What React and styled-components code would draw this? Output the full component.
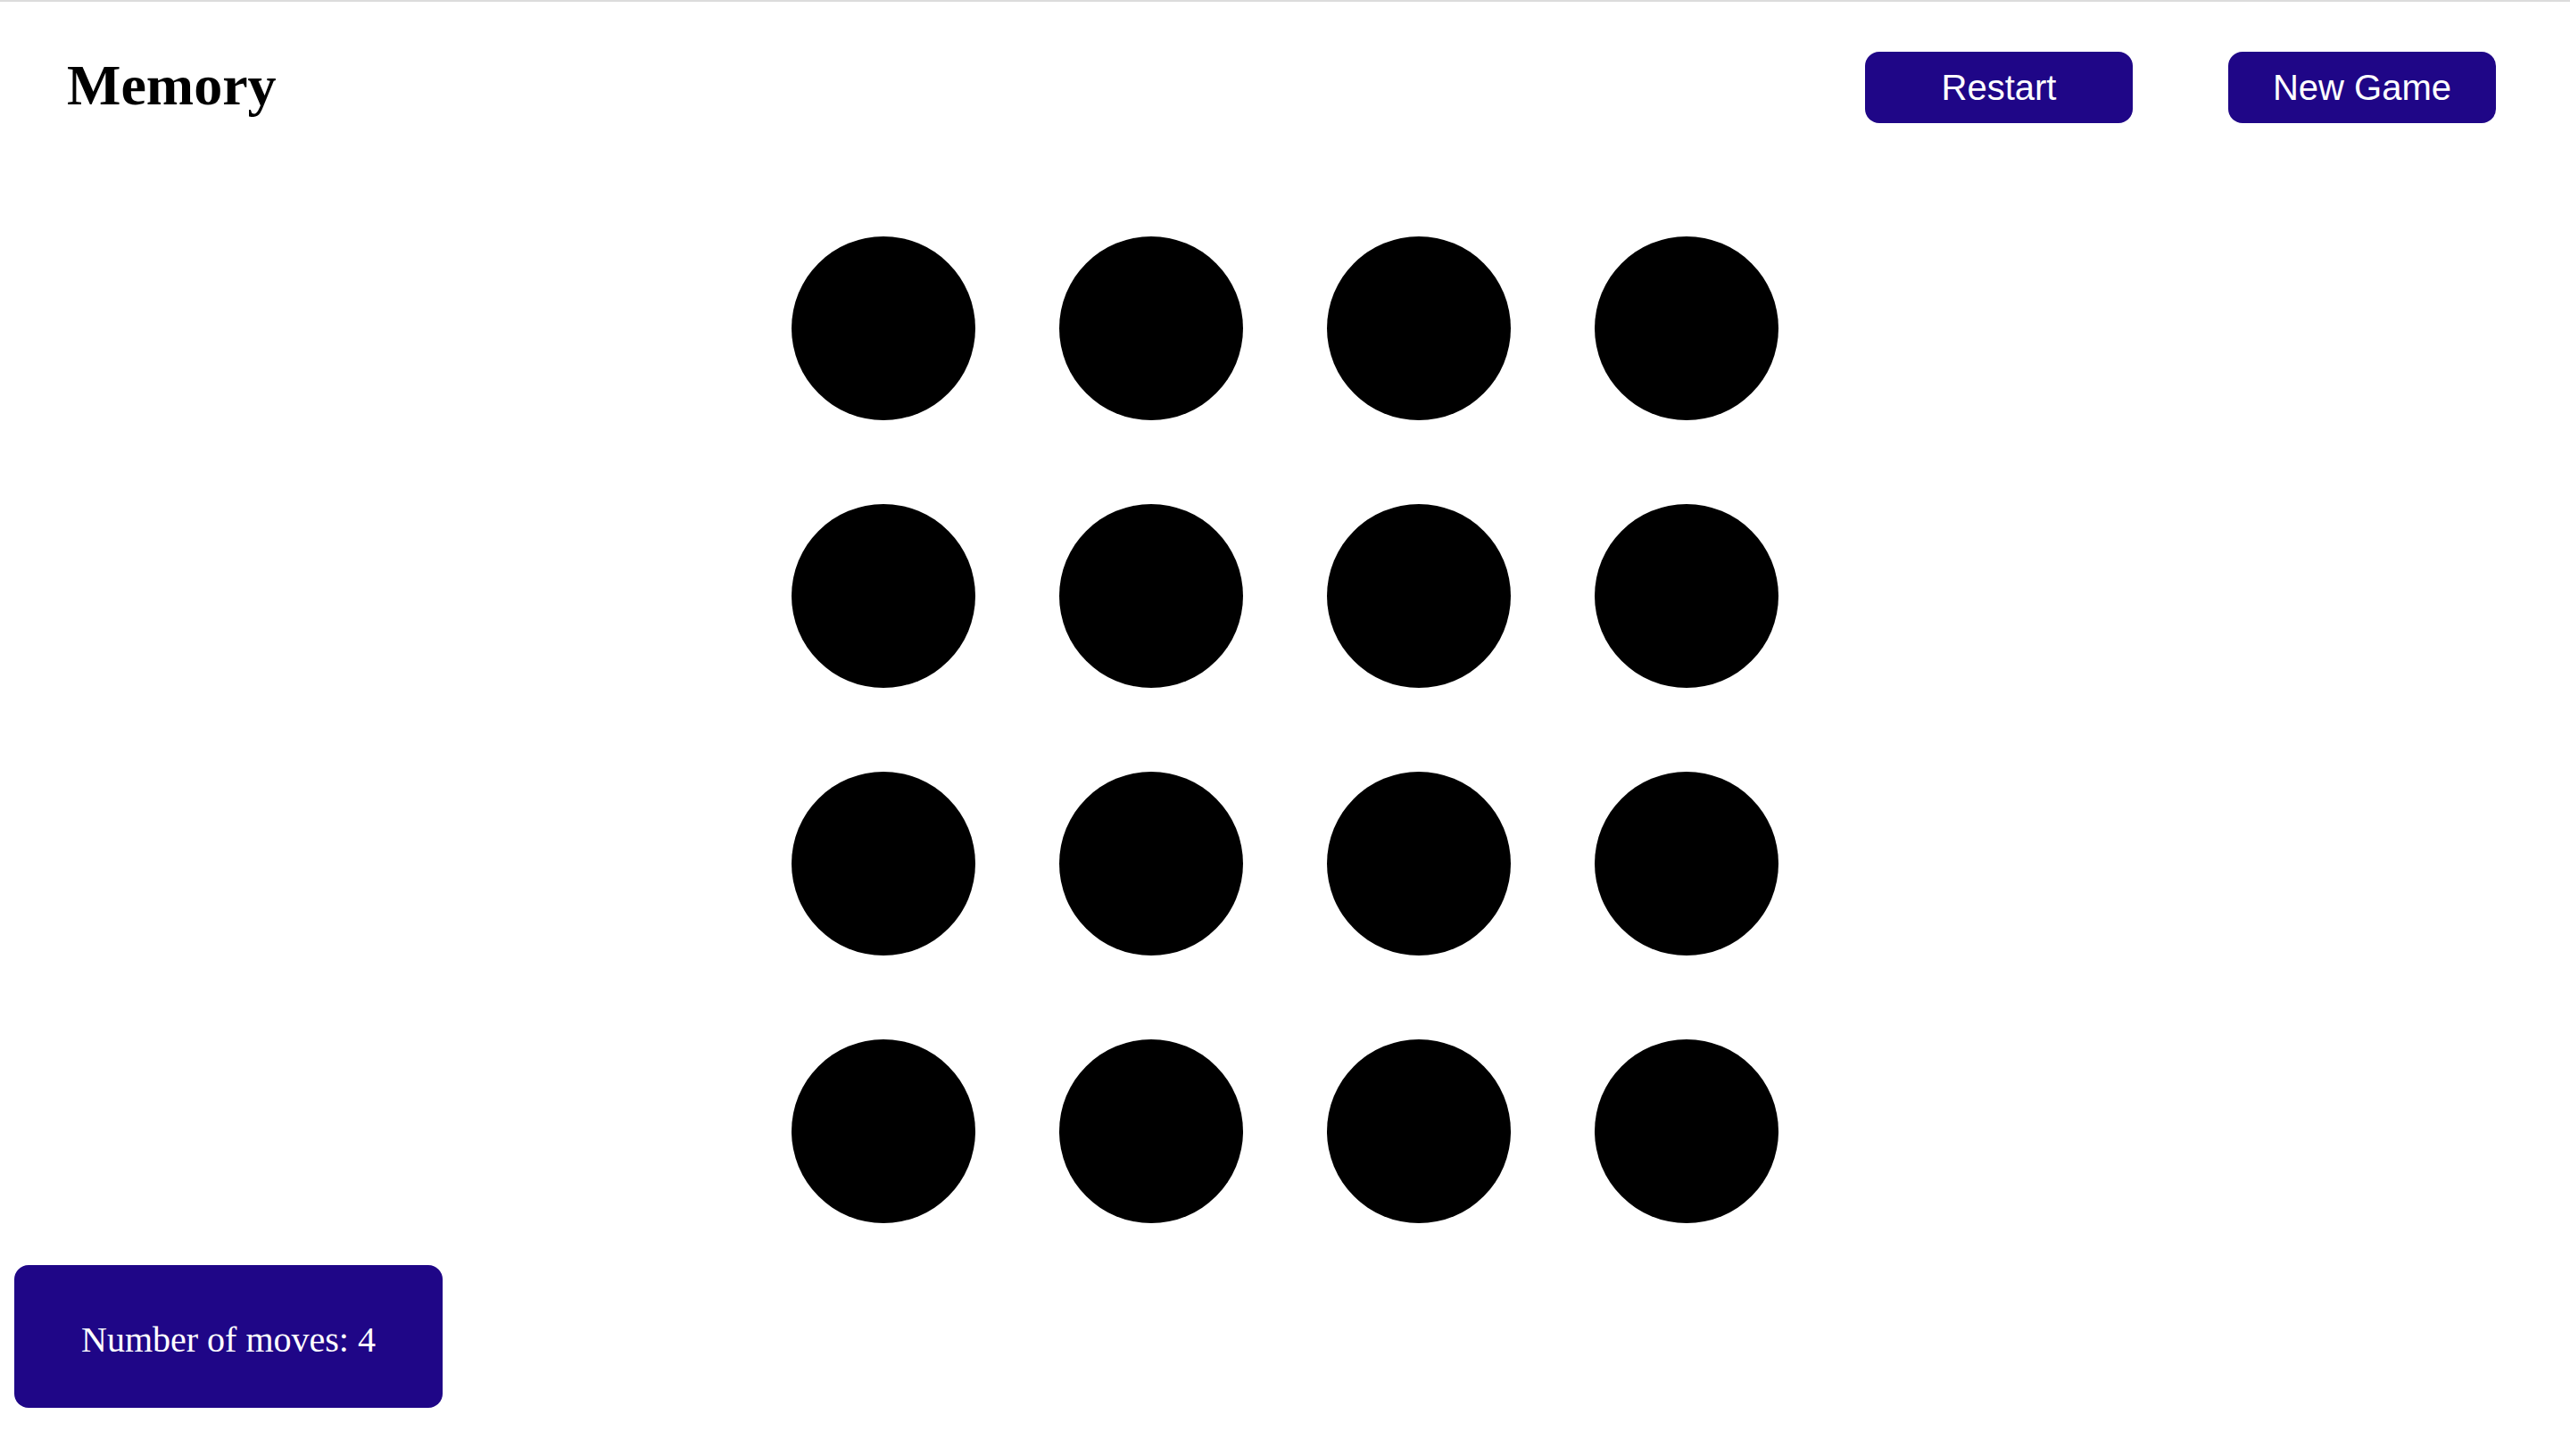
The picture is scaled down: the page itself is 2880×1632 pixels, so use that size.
import React, { useState } from 'react'
import styled, { createGlobalStyle } from 'styled-components'

const colorBoton = 'rgb(31, 6, 135)'

const GlobalStyle = createGlobalStyle`
  html, body {
    margin: 0;
    padding: 0;
    background: #ffffff;
    overflow: hidden;
  }
  body {
    border-top: 2px solid #dcdcdc;
    font-family: "Liberation Serif", "Times New Roman", serif;
  }
`

const Pagina = styled.div`
  display: flex;
  flex-direction: column;
  min-height: 1630px;
`

const Cabecera = styled.header`
  display: flex;
  justify-content: space-between;
  align-items: center;
  padding: 56px 83px 0 75px;
`

const Titulo = styled.h1`
  margin: 0 0 5px 0;
  font-family: "Liberation Serif", "Times New Roman", serif;
  font-size: 64px;
  font-weight: bold;
  color: #000;
`

const Acciones = styled.div`
  display: flex;
  gap: 107px;
`

const Boton = styled.button`
  width: 300px;
  height: 80px;
  border: none;
  border-radius: 16px;
  background: ${colorBoton};
  color: #fff;
  font-family: "Liberation Sans", Arial, sans-serif;
  font-size: 40px;
  cursor: pointer;
  padding: 0;
`

const Tablero = styled.div`
  display: grid;
  grid-template-columns: repeat(4, 206px);
  gap: 94px;
  justify-content: center;
  margin-top: 127px;
`

const Ficha = styled.div`
  width: 206px;
  height: 206px;
  border-radius: 50%;
  background: ${(props) => (props.$volteada ? props.$color : '#000')};
  cursor: pointer;
`

const Contador = styled.div`
  box-sizing: border-box;
  width: 480px;
  height: 160px;
  margin: 47px 0 0 16px;
  padding-top: 6px;
  border-radius: 16px;
  background: ${colorBoton};
  color: #fff;
  display: flex;
  align-items: center;
  justify-content: center;
  font-family: "Liberation Serif", "Times New Roman", serif;
  font-size: 40px;
`

const fichasIniciales = () =>
  Array.from({ length: 16 }, (_, i) => ({ id: i, volteada: false, color: '#000' }))

const App = () => {
  const [fichas, setFichas] = useState(fichasIniciales)
  const [movimientos, setMovimientos] = useState(4)

  const reiniciar = () => {
    setFichas(fichasIniciales())
    setMovimientos(0)
  }

  return (
    <>
      <GlobalStyle />
      <Pagina>
        <Cabecera>
          <Titulo>Memory</Titulo>
          <Acciones>
            <Boton onClick={reiniciar}>Restart</Boton>
            <Boton onClick={reiniciar}>New Game</Boton>
          </Acciones>
        </Cabecera>
        <Tablero>
          {fichas.map((ficha) => (
            <Ficha
              key={ficha.id}
              $volteada={ficha.volteada}
              $color={ficha.color}
              onClick={() => setMovimientos(movimientos + 1)}
            />
          ))}
        </Tablero>
        <Contador>Number of moves: {movimientos}</Contador>
      </Pagina>
    </>
  )
}

export default App
